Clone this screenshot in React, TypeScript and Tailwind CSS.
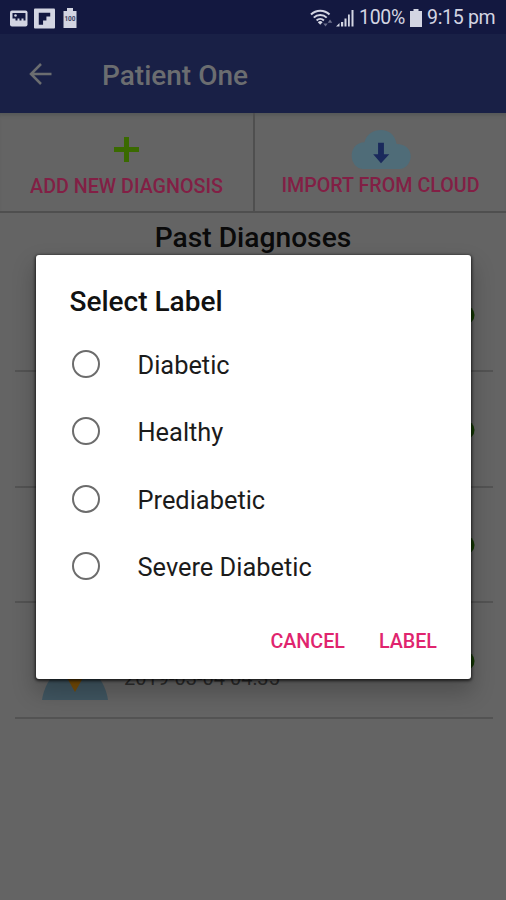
import { useState } from "react";

const labels = ["Diabetic", "Healthy", "Prediabetic", "Severe Diabetic"];

const diagnoses = [
  { id: 1, date: "" },
  { id: 2, date: "" },
  { id: 3, date: "" },
  { id: 4, date: "2019-03-04 04:35" },
];

function StatusBar() {
  return (
    <div className="flex h-[34px] items-center bg-[#131840] pt-[2px] pr-[11px] pl-[10px] text-[#d3d5e2]">
      <svg width="18" height="17" viewBox="0 0 18 17">
        <rect x="0" y="0.500" width="17.5" height="16" rx="2" fill="currentColor" />
        <path
          d="M2.500 3h13v7.500h-2V8.500h-2v2h-2v-2h-2v2h-2v-2h-3z"
          fill="#131840"
        />
        <circle cx="5.500" cy="5.500" r="1.300" fill="currentColor" />
      </svg>
      <svg className="ml-[6px]" width="21" height="21" viewBox="0 0 22 21">
        <rect width="22" height="21" rx="1" fill="currentColor" />
        <path d="M5 4.500h12v4h-4v4H9.500V17H5z" fill="#131840" />
      </svg>
      <svg className="ml-[8px]" width="14" height="20" viewBox="0 0 14 20">
        <path d="M4 0h6v3h3.500v17H.5V3H4z" fill="currentColor" />
        <text
          x="7"
          y="13"
          textAnchor="middle"
          fontSize="6.500"
          fontWeight="700"
          fill="#3c3f60"
        >
          100
        </text>
      </svg>
      <div className="grow" />
      <svg width="23" height="18" viewBox="0 0 23 18">
        <g fill="none" stroke="currentColor" strokeWidth="2">
          <path d="M1 5.500a13 13 0 0 1 18.500 0" />
          <path d="M3.800 8.600a9 9 0 0 1 12.900 0" />
          <path d="M6.600 11.500a5.200 5.200 0 0 1 7.300 0" />
        </g>
        <path d="M10.200 15.800 7.800 13.300a3.400 3.400 0 0 1 4.800 0z" fill="currentColor" />
        <path
          d="M15.500 17.500 13.300 14.500h4.400zM20 10.500l2.300 3.200h-4.600z"
          fill="#6d708c"
        />
      </svg>
      <svg className="ml-[3px]" width="18" height="18" viewBox="0 0 18 18">
        <path
          d="M0 17.500 3.500 14v3.500zM5 13h2.200v4.500H5zM8.500 9.500h2v8h-2zM12 5.500h1.800v12H12zM15.500 1h2v16.500h-2z"
          fill="currentColor"
        />
      </svg>
      <span className="ml-[5px] w-[46px] text-[19.500px] leading-none tracking-[-0.3px] whitespace-nowrap">
        100%
      </span>
      <svg className="ml-[5px]" width="12" height="18" viewBox="0 0 12 18">
        <path d="M3.500 0h5v2H12v16H0V2h3.500z" fill="currentColor" />
      </svg>
      <span className="ml-[5px] w-[68px] text-[19.500px] leading-none tracking-[-0.3px] whitespace-nowrap">
        9:15 pm
      </span>
    </div>
  );
}

function AppBar() {
  return (
    <div className="flex h-[79px] items-center bg-[#192046] pl-[29px] text-[#6b6d70]">
      <svg width="23" height="22" viewBox="0 0 23 22" className="mt-[1px]">
        <path
          d="M22.500 11H2M12 1 2 11l10 10"
          fill="none"
          stroke="currentColor"
          strokeWidth="2.500"
        />
      </svg>
      <h1 className="ml-[50px] pt-[4px] text-[28px] font-medium">Patient One</h1>
    </div>
  );
}

function Actions() {
  return (
    <div className="flex h-[100px] border-b-2 border-[#4f4f4f] text-[19.700px] font-medium text-[#821f45] shadow-[inset_0_5px_4px_-3px_#535656]">
      <button className="flex w-[253px] flex-col items-center">
        <svg className="mt-[24px]" width="25" height="25" viewBox="0 0 25 25">
          <path d="M10 0h5v10h10v5H15v10h-5V15H0v-5h10z" fill="#3a6a00" />
        </svg>
        <span className="mt-[11px] leading-[28px] whitespace-nowrap">
          ADD NEW DIAGNOSIS
        </span>
      </button>
      <div className="w-[2px] bg-[#4f4f4f]" />
      <button className="flex grow flex-col items-center">
        <svg className="mt-[16px]" width="62" height="40" viewBox="0 0 62 41">
          <path
            d="M12 41a12.500 12.500 0 0 1-11-12C.300 20 6 13.500 14 13.500 16.500 5 23 1 31 1c8 0 14.500 5 16 14.500C56 15.500 61.500 21 61.500 28S56 41 50 41z"
            fill="#4f6c78"
          />
          <path d="M28 14h6v12h5.500L31 35l-8-9h5z" fill="#1a295c" />
        </svg>
        <span className="mt-[3px] leading-[28px] whitespace-nowrap">
          IMPORT FROM CLOUD
        </span>
      </button>
    </div>
  );
}

function DiagnosisRow({ date }: { date: string }) {
  return (
    <div className="flex h-[115.400px] items-center border-b-[2px] border-[#535353] pr-[18px] pl-[27px]">
      <svg className="mt-[14px]" width="66" height="66" viewBox="0 0 66 66">
        <circle cx="33" cy="18" r="15" fill="#5a4a3c" />
        <path d="M0 66c1-7 4-16 9-22l12-6h24l12 6c5 6 8 15 9 22z" fill="#405661" />
        <path d="M24 42h18L33 58z" fill="#764c06" />
      </svg>
      <span className="mt-[36px] ml-[16px] text-[20px] text-[#2d2d2d]">{date}</span>
      <div className="grow" />
      <svg className="mt-[10px]" width="44" height="32" viewBox="0 0 44 32">
        <circle cx="8" cy="18" r="12" fill="#0b1a02" />
        <circle cx="34" cy="12" r="9.500" fill="#143c00" />
      </svg>
    </div>
  );
}

function SelectLabelDialog() {
  const [selected, setSelected] = useState("");

  return (
    <div className="absolute top-[255px] left-[35.500px] h-[424px] w-[435.500px] rounded-[3px] bg-white pt-[30px] pl-[34px] shadow-[0_1px_3px_1px_rgba(0,0,0,0.65),0_12px_22px_2px_rgba(0,0,0,0.22)]">
      <h2 className="text-[28px] leading-[34px] font-medium text-[#111]">
        Select Label
      </h2>
      <div className="mt-[11px]">
        {labels.map((label) => (
          <label key={label} className="flex h-[67.500px] items-center">
            <input
              type="radio"
              name="label"
              className="ml-[2px] size-[28px] appearance-none rounded-full border-[2.500px] border-[#6c6c6c] checked:border-8"
              checked={selected === label}
              onChange={() => setSelected(label)}
            />
            <span className="ml-[38px] pt-[2px] text-[25.400px] text-[#1b1b1b]">
              {label}
            </span>
          </label>
        ))}
      </div>
      <div className="mt-[25px] flex justify-end gap-[34px] pr-[34px] text-[19.700px] leading-[34px] font-medium text-[#e0246e]">
        <button>CANCEL</button>
        <button>LABEL</button>
      </div>
    </div>
  );
}

export default function App() {
  return (
    <div className="relative h-[900px] w-[506px] overflow-hidden bg-[#646464] font-[Roboto,sans-serif]">
      <StatusBar />
      <AppBar />
      <Actions />
      <h2 className="h-[44px] text-center text-[28.200px] leading-[50px] font-medium text-[#0a0a0a]">
        Past Diagnoses
      </h2>
      <div className="mr-[13px] ml-[15px]">
        {diagnoses.map((item) => (
          <DiagnosisRow key={item.id} date={item.date} />
        ))}
      </div>
      <SelectLabelDialog />
    </div>
  );
}
